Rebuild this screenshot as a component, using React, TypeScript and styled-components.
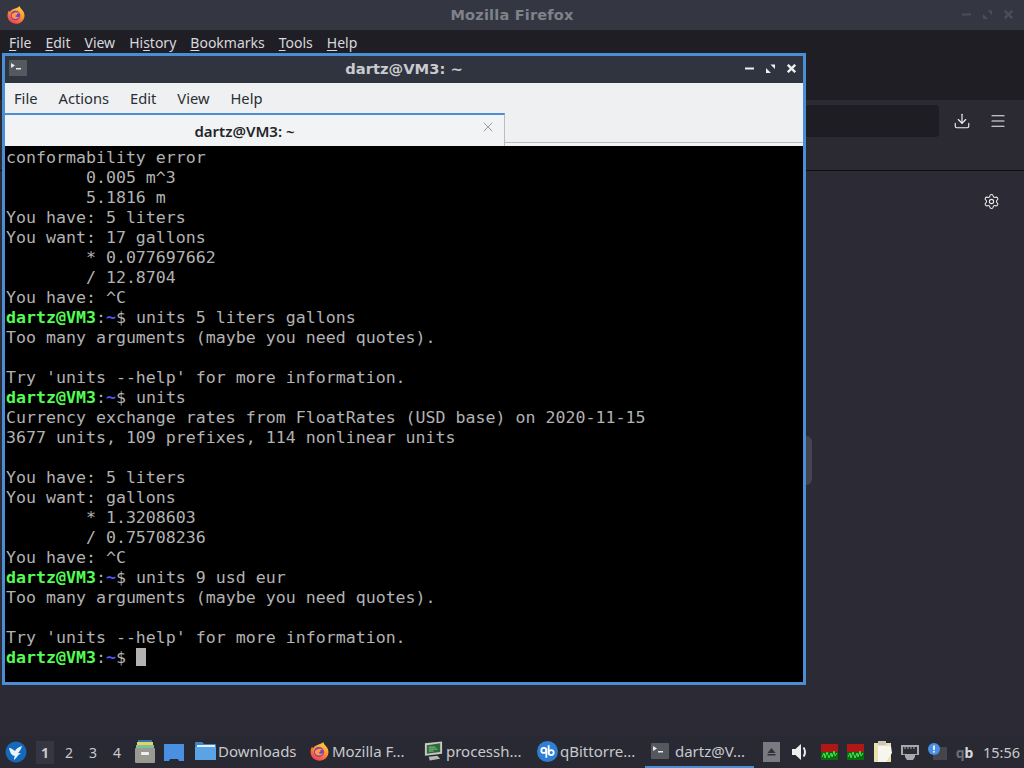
import React from "react";
import styled, { createGlobalStyle } from "styled-components";
import { Settings, Download, Menu as MenuIcon, X } from "lucide-react";

const GlobalStyle = createGlobalStyle`
  html, body {
    margin: 0;
    padding: 0;
    width: 1024px;
    height: 768px;
    overflow: hidden;
    background: #2f2f3a;
  }
`;

const Desktop = styled.div`
  position: relative;
  width: 1024px;
  height: 768px;
  display: flex;
  flex-direction: column;
  overflow: hidden;
  font-family: "Noto Sans", "DejaVu Sans", sans-serif;
`;

const Workspace = styled.div`
  position: relative;
  flex: 1;
  min-height: 0;
`;

/* firefox window behind the terminal */
const BrowserWindow = styled.div`
  height: 100%;
  display: flex;
  flex-direction: column;
  background: #2c2b35;
`;

const BrowserTitle = styled.div`
  position: relative;
  height: 30px;
  display: flex;
  align-items: center;
  justify-content: center;
  background: #343742;
  color: #7f828a;
  font-family: "DejaVu Sans", sans-serif;
  font-size: 14.5px;
  font-weight: 700;
  letter-spacing: 0.2px;
`;

const LogoSlot = styled.div`
  position: absolute;
  left: 6px;
  top: 5px;
  display: flex;
`;

const WindowControls = styled.div<{ $right: number; $top: number; $color: string }>`
  position: absolute;
  right: ${({ $right }) => $right}px;
  top: ${({ $top }) => $top}px;
  display: flex;
  align-items: center;
  gap: 12px;
  color: ${({ $color }) => $color};
`;

const BrowserMenu = styled.div`
  height: 23px;
  padding: 3px 9px 0;
  box-sizing: border-box;
  display: flex;
  align-items: center;
  gap: 14px;
  background: #1f1e25;
  color: #d8d8dc;
  font-size: 14px;
`;

const BrowserMenuItem = styled.span`
  line-height: 20px;
  white-space: pre;
`;

const Mnemonic = styled.span`
  text-decoration: underline;
  text-underline-offset: 2px;
`;

const TabStrip = styled.div`
  height: 47px;
  background: #1f1e25;
`;

const NavBar = styled.div`
  height: 71px;
  box-sizing: border-box;
  padding: 5px 17px 0 0;
  display: flex;
  justify-content: flex-end;
  align-items: flex-start;
  background: #2b2a32;
  border-bottom: 1px solid #0e0e12;
`;

const UrlField = styled.div`
  width: 134px;
  height: 32px;
  border-radius: 4px;
  background: #1e1d23;
`;

const NavIcons = styled.div`
  display: flex;
  align-items: center;
  gap: 18px;
  height: 32px;
  margin-left: 14px;
  color: #f1f1f3;
`;

const ContentArea = styled.div`
  flex: 1;
  padding: 22px 24px 0 0;
  display: flex;
  justify-content: flex-end;
  align-items: flex-start;
  color: #ececef;
`;

const ScrollHandle = styled.div`
  position: absolute;
  left: 806px;
  top: 436px;
  width: 6px;
  height: 49px;
  border-radius: 0 6px 6px 0;
  background: #45444f;
`;

/* terminal window, its place on the desktop is the content */
const TerminalWindow = styled.div`
  position: absolute;
  left: 2px;
  top: 53px;
  width: 804px;
  height: 632px;
  box-sizing: border-box;
  display: flex;
  flex-direction: column;
  border: 3px solid #4a8ed6;
  background: #000;
`;

const TerminalTitle = styled.div`
  position: relative;
  height: 27px;
  flex: none;
  box-sizing: border-box;
  padding-bottom: 2px;
  display: flex;
  align-items: center;
  justify-content: center;
  background: #30343e;
  color: #c9cbd0;
  font-family: "DejaVu Sans", sans-serif;
  font-size: 14.7px;
  font-weight: 700;
`;

const TitleIconSlot = styled.div`
  position: absolute;
  left: 4px;
  top: 4px;
  display: flex;
`;

const MenuBar = styled.div`
  height: 30px;
  flex: none;
  padding: 0 9px;
  display: flex;
  align-items: center;
  gap: 21px;
  background: #eff0f1;
  color: #2a2e32;
  font-size: 14.7px;
`;

const TabBar = styled.div`
  height: 33px;
  flex: none;
  display: flex;
  background: #eff0f1;
  box-shadow: inset 0 -3px #f3f4f5, inset 0 -4px #b9bcc0;
`;

const ActiveTab = styled.div`
  position: relative;
  width: 500px;
  box-sizing: border-box;
  padding-right: 20px;
  display: flex;
  align-items: center;
  justify-content: center;
  background: #f2f3f4;
  border-top: 2px solid #4a8ed6;
  border-right: 1px solid #b9bcc0;
  color: #22262a;
  font-size: 15px;
  font-weight: 600;
`;

const TabClose = styled.span`
  position: absolute;
  right: 8px;
  top: 4px;
  display: flex;
  color: #6b6f74;
`;

const Screen = styled.div`
  flex: 1;
  padding: 2px 0 0 1px;
  background: #000;
  color: #b2b2b2;
  font-family: "DejaVu Sans Mono", monospace;
  font-size: 16.6px;
  line-height: 20px;
  white-space: pre;
  overflow: hidden;
`;

const Line = styled.div`
  height: 20px;
`;

const PromptUser = styled.span`
  color: #54fc54;
  font-weight: 700;
`;

const PromptPath = styled.span`
  color: #5454fc;
  font-weight: 700;
`;

const Cursor = styled.span`
  display: inline-block;
  width: 10px;
  height: 18px;
  vertical-align: -3px;
  background: #b2b2b2;
`;

/* bottom panel */
const Panel = styled.div`
  height: 32px;
  flex: none;
  display: flex;
  align-items: center;
  padding-left: 5px;
  background: #282933;
  color: #c8c9cd;
  font-size: 15px;
`;

const Pager = styled.div`
  display: flex;
  align-items: center;
  gap: 6px;
  margin-left: 9px;
`;

const PagerItem = styled.div<{ $active?: boolean }>`
  width: 18px;
  height: 23px;
  display: flex;
  align-items: center;
  justify-content: center;
  font-size: 14px;
  background: ${({ $active }) => ($active ? "#353642" : "transparent")};
  font-weight: ${({ $active }) => ($active ? 700 : 400)};
`;

const Launchers = styled.div`
  display: flex;
  align-items: center;
  gap: 8px;
  margin: 0 5px 0 8px;
`;

const TaskButton = styled.div<{ $width: number; $active?: boolean }>`
  width: ${({ $width }) => $width}px;
  height: 32px;
  box-sizing: border-box;
  padding-left: 6px;
  display: flex;
  align-items: center;
  gap: 2px;
  white-space: nowrap;
  border-bottom: 2px solid ${({ $active }) => ($active ? "#4a8ed6" : "transparent")};
`;

const Tray = styled.div`
  display: flex;
  align-items: center;
  margin-left: 3px;
`;

const TraySlot = styled.div<{ $width: number }>`
  width: ${({ $width }) => $width}px;
  display: flex;
  justify-content: center;
  align-items: center;
`;

const TrayText = styled.span`
  font-size: 14px;
  font-weight: 700;
  color: #d8d9dc;
`;

const FadedQ = styled.span`
  color: #6b6d75;
`;

const Clock = styled.span`
  margin-left: 7px;
  font-size: 14.5px;
  color: #c8c9cd;
`;

const FirefoxLogo: React.FC<{ size?: number; id: string }> = ({ size = 20, id }) => (
  <svg width={size} height={size} viewBox="0 0 20 20">
    <defs>
      <linearGradient id={id} x1="0.7" y1="0" x2="0.2" y2="1">
        <stop offset="0" stopColor="#ffd23a" />
        <stop offset="0.5" stopColor="#ff8a2a" />
        <stop offset="1" stopColor="#f0345c" />
      </linearGradient>
    </defs>
    <path
      d="M13.6 1c.3 2 1.600 2.600 3 4.400 1.300 1.700 1.900 3.200 1.900 5 0 4.800-3.800 8.300-8.500 8.300S1.500 15.200 1.500 10.500c0-2 .6-3.700 1.500-5l.7 1.600c.7-1.300 1.800-2.300 3.300-2.900C9.800 3.100 12.800 2.500 13.600 1z"
      fill={`url(#${id})`}
    />
    <circle cx="9.500" cy="10.500" r="4.800" fill="#7a3fc0" />
    <path
      d="M6 9c2-2 5.500-2.200 7.800-.8-1.500-.2-2.500.2-3 1 .6.500-.3 1.500-1.500 1.500.5 1.500 2.500 1.800 4.200 1-1 2-4.500 3-6.500 1.500C5.500 12 5.300 10.500 6 9z"
      fill="#ff9a3c"
    />
  </svg>
);

const TerminalIcon: React.FC = () => (
  <svg width="18" height="16" viewBox="0 0 18 16">
    <rect width="18" height="16" rx="1" fill="#55585e" />
    <path d="M2 3l4 2.500L2 8z" fill="#e8e8e8" />
    <rect x="7" y="8" width="5" height="1.500" fill="#e8e8e8" />
  </svg>
);

const WinMinimize: React.FC = () => (
  <svg width="9" height="9" viewBox="0 0 9 9" fill="currentColor">
    <rect y="3.500" width="9" height="2" />
  </svg>
);

const WinMaximize: React.FC = () => (
  <svg width="9" height="9" viewBox="0 0 9 9" fill="currentColor">
    <path d="M4.500 0.500H9V5zM0 4l5 5H0z" />
  </svg>
);

const WinClose: React.FC = () => (
  <svg width="9" height="9" viewBox="0 0 9 9" stroke="currentColor" strokeWidth="2.400">
    <path d="M0.800 0.800l7.400 7.400M8.200 0.800L0.800 8.200" />
  </svg>
);

const PanelLogo: React.FC = () => (
  <svg width="22" height="22" viewBox="0 0 22 22">
    <circle cx="11" cy="11" r="10.500" fill="#1668b8" />
    <path
      d="M4 7c3 0 4 2 6 3 1-2 3-4 7-5-1 3-2 5-4 7 1 0 2 0 3 1-2 0-3 1-4 3-1 1-2 2-3 3 0-2 0-3 1-4-3 0-5-3-6-8z"
      fill="#e8f2fb"
    />
  </svg>
);

const CabinetIcon: React.FC = () => (
  <svg width="22" height="24" viewBox="0 0 22 24">
    <rect x="4" y="0" width="14" height="3" fill="#3d6fb0" />
    <rect x="3" y="2" width="16" height="3" fill="#e0d65a" />
    <rect x="2" y="5" width="18" height="3" fill="#7cc0a0" />
    <rect x="1" y="8" width="20" height="15" rx="1" fill="#9a9a92" />
    <rect x="7" y="12" width="8" height="3" rx="1" fill="#f0f0ea" />
  </svg>
);

const DesktopIcon: React.FC = () => (
  <svg width="20" height="17" viewBox="0 0 20 17">
    <path d="M0 0h20v17h-5l-1-2H6l-1 2H0z" fill="#4a90e2" />
  </svg>
);

const FolderIcon: React.FC = () => (
  <svg width="21" height="20" viewBox="0 0 21 20">
    <path d="M0 2a1 1 0 011-1h6l2 2h11a1 1 0 011 1v15H0z" fill="#3f86c9" />
    <rect x="2" y="4" width="18" height="2" fill="#e6eef6" />
    <rect x="0" y="6" width="21" height="13" fill="#5aa3e4" />
  </svg>
);

const MonitorIcon: React.FC = () => (
  <svg width="21" height="22" viewBox="0 0 22 22">
    <path d="M2 3l18-2v13L2 16z" fill="#c8c8c4" />
    <path d="M4 5l14-2v9L4 14z" fill="#2f6b3a" />
    <path d="M6 7h7M6 9h9M6 11h5" stroke="#8cc68c" strokeWidth="1" />
    <path d="M6 17l9-1 3 3-11 2z" fill="#b9b9b4" />
  </svg>
);

const QbitIcon: React.FC = () => (
  <svg width="21" height="21" viewBox="0 0 20 20">
    <circle cx="10" cy="10" r="10" fill="#2f7fd6" />
    <circle cx="6.500" cy="9" r="2.400" fill="none" stroke="#fff" strokeWidth="1.700" />
    <path d="M8.900 7v9" stroke="#fff" strokeWidth="1.700" />
    <circle cx="13.500" cy="11" r="2.400" fill="none" stroke="#fff" strokeWidth="1.700" />
    <path d="M11.100 4v9" stroke="#fff" strokeWidth="1.700" />
  </svg>
);

const EjectIcon: React.FC = () => (
  <svg width="17" height="20" viewBox="0 0 17 20">
    <rect width="17" height="20" fill="#7a7b80" />
    <path d="M8.500 6l4 5h-8z" fill="#30313a" />
    <rect x="4.500" y="12" width="8" height="1.500" fill="#30313a" />
  </svg>
);

const VolumeIcon: React.FC = () => (
  <svg width="16" height="16" viewBox="0 0 16 16">
    <path d="M0 5h3.500L9 0v16l-5.500-5H0z" fill="#eeeeee" />
    <path d="M11.500 3.500c2 2.500 2 6.500 0 9" fill="none" stroke="#eeeeee" strokeWidth="2" />
  </svg>
);

const GraphIcon: React.FC = () => (
  <svg width="17" height="16" viewBox="0 0 17 16">
    <rect width="17" height="8" fill="#b01818" />
    <rect y="8" width="17" height="8" fill="#0a6a10" />
    <path d="M1 13l2-4 1 5 2-6 2 6 2-5 1 4 2-6 1 5 2-3" stroke="#49e04f" strokeWidth="1" fill="none" />
  </svg>
);

const ClipboardIcon: React.FC = () => (
  <svg width="20" height="22" viewBox="0 0 20 22">
    <rect x="1" y="2" width="17" height="19" fill="#e9e2b0" />
    <rect x="5" y="0" width="8" height="4" fill="#c9c8bf" />
    <path d="M5 5h13l1 7-6 9H5z" fill="#f6f5ee" />
  </svg>
);

const NetworkIcon: React.FC = () => (
  <svg width="20" height="17" viewBox="0 0 20 17">
    <path d="M1 1h18v10h-4v2l-2 3H7l-2-3v-2H1z" fill="#a8a9ad" />
    <rect x="3" y="3" width="14" height="7" fill="#2b2c34" />
    <path d="M5 3v2M8 3v2M11 3v2M14 3v2" stroke="#a8a9ad" />
  </svg>
);

const NotifyIcon: React.FC = () => (
  <svg width="19" height="18" viewBox="0 0 19 18">
    <rect x="5" y="4" width="14" height="13" fill="#45464c" />
    <circle cx="6" cy="6" r="6" fill="#4a90e2" />
    <rect x="5.200" y="2.500" width="1.600" height="4.500" fill="#fff" />
    <rect x="5.200" y="8" width="1.600" height="1.600" fill="#fff" />
  </svg>
);

const Prompt: React.FC<{ children?: React.ReactNode }> = ({ children }) => (
  <Line>
    <PromptUser>dartz@VM3</PromptUser>:<PromptPath>~</PromptPath>$ {children}
  </Line>
);

const output: (string | { cmd: string })[] = [
  "conformability error",
  "        0.005 m^3",
  "        5.1816 m",
  "You have: 5 liters",
  "You want: 17 gallons",
  "        * 0.077697662",
  "        / 12.8704",
  "You have: ^C",
  { cmd: "units 5 liters gallons" },
  "Too many arguments (maybe you need quotes).",
  "",
  "Try 'units --help' for more information.",
  { cmd: "units" },
  "Currency exchange rates from FloatRates (USD base) on 2020-11-15",
  "3677 units, 109 prefixes, 114 nonlinear units",
  "",
  "You have: 5 liters",
  "You want: gallons",
  "        * 1.3208603",
  "        / 0.75708236",
  "You have: ^C",
  { cmd: "units 9 usd eur" },
  "Too many arguments (maybe you need quotes).",
  "",
  "Try 'units --help' for more information.",
];

const browserMenu: [string, string, string][] = [
  ["", "F", "ile"],
  ["", "E", "dit"],
  ["", "V", "iew"],
  ["Hi", "s", "tory"],
  ["", "B", "ookmarks"],
  ["", "T", "ools"],
  ["", "H", "elp"],
];

const App: React.FC = () => (
  <>
    <GlobalStyle />
    <Desktop>
      <Workspace>
        <BrowserWindow>
          <BrowserTitle>
            <LogoSlot>
              <FirefoxLogo id="ffTitle" />
            </LogoSlot>
            Mozilla Firefox
            <WindowControls $right={11} $top={10} $color="#4b4e59">
              <WinMinimize />
              <WinMaximize />
              <WinClose />
            </WindowControls>
          </BrowserTitle>
          <BrowserMenu>
            {browserMenu.map(([pre, key, rest]) => (
              <BrowserMenuItem key={key + rest}>
                {pre}
                <Mnemonic>{key}</Mnemonic>
                {rest}
              </BrowserMenuItem>
            ))}
          </BrowserMenu>
          <TabStrip />
          <NavBar>
            <UrlField />
            <NavIcons>
              <Download size={18} strokeWidth={1.5} />
              <MenuIcon size={18} strokeWidth={1.5} />
            </NavIcons>
          </NavBar>
          <ContentArea>
            <Settings size={17} strokeWidth={1.5} />
          </ContentArea>
        </BrowserWindow>
        <ScrollHandle />
        <TerminalWindow>
          <TerminalTitle>
            <TitleIconSlot>
              <TerminalIcon />
            </TitleIconSlot>
            dartz@VM3: ~
            <WindowControls $right={7} $top={8} $color="#eceef0">
              <WinMinimize />
              <WinMaximize />
              <WinClose />
            </WindowControls>
          </TerminalTitle>
          <MenuBar>
            <span>File</span>
            <span>Actions</span>
            <span>Edit</span>
            <span>View</span>
            <span>Help</span>
          </MenuBar>
          <TabBar>
            <ActiveTab>
              dartz@VM3: ~
              <TabClose>
                <X size={16} strokeWidth={1} />
              </TabClose>
            </ActiveTab>
          </TabBar>
          <Screen>
            {output.map((row, i) =>
              typeof row === "string" ? (
                <Line key={i}>{row}</Line>
              ) : (
                <Prompt key={i}>{row.cmd}</Prompt>
              )
            )}
            <Prompt>
              <Cursor />
            </Prompt>
          </Screen>
        </TerminalWindow>
      </Workspace>
      <Panel>
        <PanelLogo />
        <Pager>
          <PagerItem $active>1</PagerItem>
          <PagerItem>2</PagerItem>
          <PagerItem>3</PagerItem>
          <PagerItem>4</PagerItem>
        </Pager>
        <Launchers>
          <CabinetIcon />
          <DesktopIcon />
        </Launchers>
        <TaskButton $width={114}>
          <FolderIcon />
          Downloads
        </TaskButton>
        <TaskButton $width={114}>
          <FirefoxLogo id="ffTask" size={21} />
          Mozilla F...
        </TaskButton>
        <TaskButton $width={114}>
          <MonitorIcon />
          processh...
        </TaskButton>
        <TaskButton $width={114}>
          <QbitIcon />
          qBittorre...
        </TaskButton>
        <TaskButton $width={109} $active>
          <TerminalIcon />
          &nbsp;dartz@V...
        </TaskButton>
        <Tray>
          <TraySlot $width={28}>
            <EjectIcon />
          </TraySlot>
          <TraySlot $width={30}>
            <VolumeIcon />
          </TraySlot>
          <TraySlot $width={28}>
            <GraphIcon />
          </TraySlot>
          <TraySlot $width={24}>
            <GraphIcon />
          </TraySlot>
          <TraySlot $width={32}>
            <ClipboardIcon />
          </TraySlot>
          <TraySlot $width={22}>
            <NetworkIcon />
          </TraySlot>
          <TraySlot $width={32}>
            <NotifyIcon />
          </TraySlot>
          <TraySlot $width={23}>
            <TrayText>
              <FadedQ>q</FadedQ>b
            </TrayText>
          </TraySlot>
          <Clock>15:56</Clock>
        </Tray>
      </Panel>
    </Desktop>
  </>
);

export default App;
